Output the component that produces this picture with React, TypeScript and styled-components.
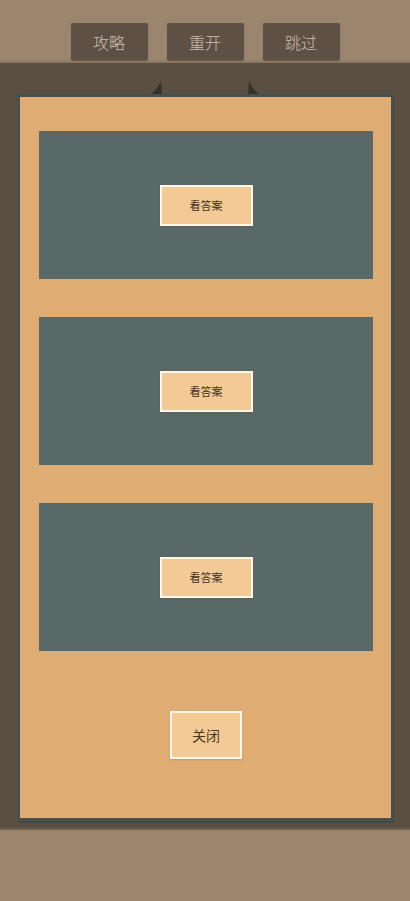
import React from 'react';
import styled, { createGlobalStyle } from 'styled-components';

const GlobalStyle = createGlobalStyle`
    html, body {
        margin: 0;
        padding: 0;
        background: #5b4f43;
    }
    body {
        font-family: "Noto Sans CJK SC", "Noto Sans", sans-serif;
    }
    * {
        box-sizing: border-box;
    }
`;

const Page = styled.div`
    width: 410px;
    height: 901px;
    display: flex;
    flex-direction: column;
    overflow: hidden;
`;

const TopBar = styled.header`
    height: 63px;
    padding-top: 23px;
    background: #9b866d;
    border-bottom: 2px solid #8b7761;
    display: flex;
    justify-content: center;
    align-items: flex-start;
    gap: 19px;
`;

const ToolButton = styled.button`
    width: 77px;
    height: 37px;
    border: none;
    border-radius: 2px;
    background: #5e5044;
    color: #cbc0b0;
    font-family: inherit;
    font-size: 16px;
    font-weight: 300;
    box-shadow: 0 1px 1px rgba(60, 48, 36, 0.5);
    padding: 0;
`;

const Stage = styled.main`
    height: 767px;
    background: #5b4f43;
    padding: 18px 0 0 17px;
    border-bottom: 2px solid #6f604f;
`;

const Ears = styled.div`
    width: 376px;
    height: 13px;
    display: flex;
    justify-content: center;
    gap: 86px;
`;

const Panel = styled.section`
    width: 376px;
    height: 727px;
    background: #dfad74;
    border: 3px solid #46514b;
    border-right-width: 2px;
    box-shadow: 1px 2px 0 #3f4843;
    padding: 34px 18px 0 19px;
    display: flex;
    flex-direction: column;
    gap: 38px;
`;

const Card = styled.div`
    height: 148px;
    background: #586968;
    display: flex;
    align-items: center;
    justify-content: center;
`;

const PaleButton = styled.button<{ $big?: boolean }>`
    width: ${p => (p.$big ? 72 : 93)}px;
    height: ${p => (p.$big ? 48 : 41)}px;
    background: #f3ca96;
    border: 2px solid #fff7ea;
    color: ${p => (p.$big ? '#4a3522' : '#3f3023')};
    font-family: inherit;
    font-size: ${p => (p.$big ? 14 : 11)}px;
    padding: 0;
    box-shadow: 0 1px 2px rgba(120, 80, 40, 0.25);
`;

const CloseRow = styled.div`
    margin-top: 22px;
    display: flex;
    justify-content: center;
`;

const BottomBar = styled.footer`
    flex: 1;
    background: #9b856c;
`;

const Ear = ({ flip }: { flip?: boolean }) => (
    <svg width="11" height="13" viewBox="0 0 11 13" style={flip ? { transform: 'scaleX(-1)' } : undefined}>
        <path d="M10 0 L11 13 L0 13 Q6 9 10 0 Z" fill="#35302a" />
    </svg>
);

const App = () => {
    return (
        <Page>
            <GlobalStyle />
            <TopBar>
                <ToolButton>攻略</ToolButton>
                <ToolButton>重开</ToolButton>
                <ToolButton>跳过</ToolButton>
            </TopBar>
            <Stage>
                <Ears>
                    <Ear />
                    <Ear flip />
                </Ears>
                <Panel>
                    {[0, 1, 2].map(i => (
                        <Card key={i}>
                            <PaleButton>看答案</PaleButton>
                        </Card>
                    ))}
                    <CloseRow>
                        <PaleButton $big>关闭</PaleButton>
                    </CloseRow>
                </Panel>
            </Stage>
            <BottomBar />
        </Page>
    );
};

export default App;
